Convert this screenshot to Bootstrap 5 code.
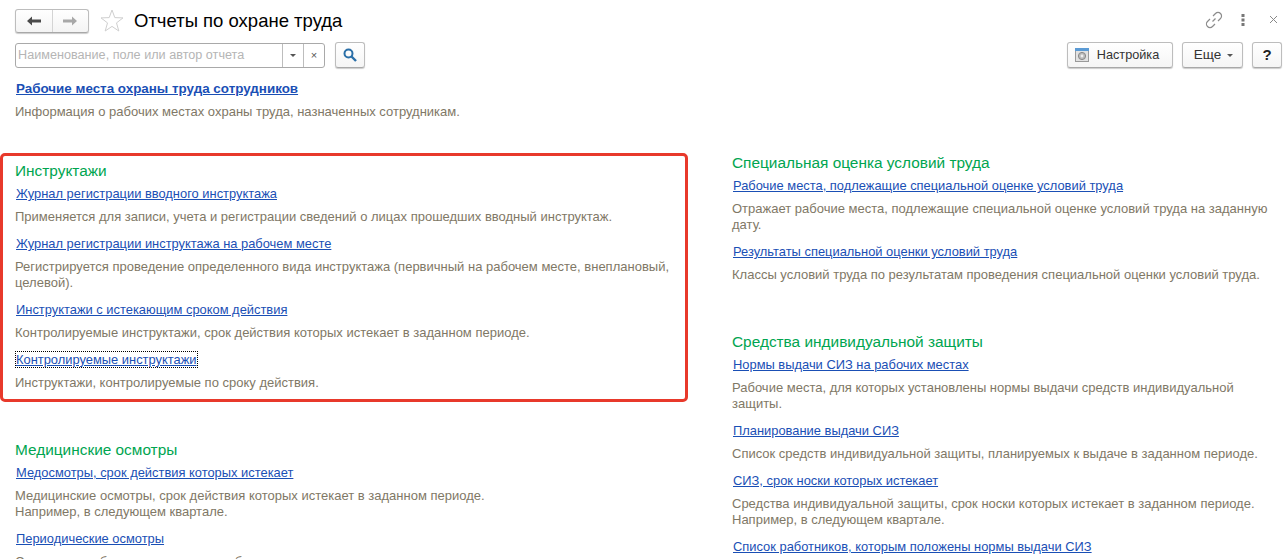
<!DOCTYPE html>
<html lang="ru">
<head>
    <meta charset="UTF-8">
    <meta name="viewport" content="width=device-width, initial-scale=1.0">
    <title>Отчеты по охране труда</title>
    <link href="https://cdn.jsdelivr.net/npm/bootstrap@5.3.0/dist/css/bootstrap.min.css" rel="stylesheet">
    <style>
        html, body { height: 559px; overflow: hidden; }
        body { font-family: "Liberation Sans", Arial, sans-serif; font-size: 13px; line-height: 15px; color: #333; background: #fff; }
        .page-top { padding: 8px 2px 0 15px; height: 81px; }
        .title-row { height: 25px; }
        .nav-pair { width: 74px; height: 24px; border: 1px solid #bdbdbd; border-bottom-color: #a8a8a8; border-radius: 3px; box-shadow: 0 1px 1px #ccc; background: linear-gradient(#fff, #f4f4f4); }
        .nav-half { width: 37px; height: 100%; display: flex; align-items: center; justify-content: center; }
        .nav-half + .nav-half { border-left: 1px solid #d4d4d4; }
        .star-icon { margin: 0 10px 0 11px; }
        .page-title { font-size: 18.5px; line-height: 24px; color: #000; margin: 0; font-weight: 400; }
        .top-icons { margin: 0 4px 2px 0; }
        .icon-dots { margin: 0 24px 0 18px; }
        .filter-row { margin-top: 9px; height: 26px; }
        .search-box { width: 310px; height: 25px; border: 1px solid #a9a9a9; border-radius: 3px; background: #fff; }
        .search-input { flex: 1 1 auto; min-width: 0; border: 0; padding: 0 2px; font-size: 12.65px; color: #333; font-family: inherit; outline: 0; background: transparent; }
        .search-input::placeholder { color: #b5b5b5; opacity: 1; }
        .search-cell { width: 21px; height: 100%; border-left: 1px solid #bdbdbd; display: flex; align-items: center; justify-content: center; font-size: 11px; color: #555; }
        .tool-btn { height: 26px; border: 1px solid #bdbdbd; border-bottom-color: #a8a8a8; border-radius: 3px; background: linear-gradient(#fff, #f5f5f5); box-shadow: 0 1px 1px #ccc; color: #333; font-size: 12.7px; line-height: 24px; padding: 0; display: inline-flex; align-items: center; justify-content: center; }
        .btn-find { width: 30px; margin-left: 10px; }
        .btn-setup { width: 106px; gap: 8px; padding-right: 6px; }
        .btn-more { width: 61px; gap: 6px; margin-left: 9px; padding-left: 2px; font-size: 13.5px; }
        .btn-help { width: 30px; margin-left: 9px; font-weight: 700; font-size: 15px; color: #222; }
        .caret-mark { width: 0; height: 0; border-left: 3px solid transparent; border-right: 3px solid transparent; border-top: 3px solid #555; }
        .report-col { width: 655px; }
        .col-left { width: 717px; padding-left: 15px; flex: none; }
        .col-right { flex: 1 1 auto; padding: 0 14px 0 15px; margin-top: 73px; }
        .group-title { color: #00a550; font-size: 15.4px; line-height: 18px; font-weight: 400; margin: 0 0 6px 0; }
        .report-link { display: inline-block; color: #1a4fb5; font-size: 12.9px; line-height: 15px; text-decoration: underline; margin-left: 1px; }
        .report-link.is-main { font-weight: 700; font-size: 13.4px; }
        .report-link.is-focus { outline: 1px dotted #000; outline-offset: 0; }
        .report-text { color: #7f7866; font-size: 13px; line-height: 16px; margin: 8px 0 0 0; }
        .report-item { margin-bottom: 11px; }
        .red-frame { position: absolute; left: 0; top: 153px; width: 688px; height: 249px; border: 3px solid #e8392b; border-radius: 5px; pointer-events: none; }
        .top-block { margin-bottom: 42px; }
        .gap-block { margin-bottom: 50px; }
    </style>
</head>
<body class="position-relative">
    <div class="page-top">
        <div class="title-row d-flex align-items-center">
            <div class="nav-pair d-flex">
                <div class="nav-half">
                    <svg width="14" height="10" viewBox="0 0 14 10"><path d="M0 5 L5 0.5 V3.6 H14 V6.4 H5 V9.5 Z" fill="#4a4a4a"/></svg>
                </div>
                <div class="nav-half">
                    <svg width="14" height="10" viewBox="0 0 14 10"><path d="M14 5 L9 0.5 V3.6 H0 V6.4 H9 V9.5 Z" fill="#a8a8a8"/></svg>
                </div>
            </div>
            <svg class="star-icon" width="24" height="23" viewBox="0 0 24 23"><path d="M12 1 L14.8 8.6 L23 8.9 L16.5 13.9 L18.8 22 L12 17.4 L5.2 22 L7.5 13.9 L1 8.9 L9.2 8.6 Z" fill="none" stroke="#cfcfcf" stroke-width="1"/></svg>
            <h1 class="page-title">Отчеты по охране труда</h1>
            <div class="top-icons d-flex align-items-center ms-auto">
                <svg width="18" height="18" viewBox="0 0 18 18" fill="none" stroke="#8c8c8c" stroke-width="1.2"><path d="M7.5 10.5 L10.5 7.5"/><path d="M8 5 L10.5 2.5 a3 3 0 0 1 5 5 L13 10"/><path d="M10 13 L7.5 15.5 a3 3 0 0 1 -5 -5 L5 8"/></svg>
                <svg class="icon-dots" width="4" height="12" viewBox="0 0 4 12" fill="#777"><rect x="0.5" y="0" width="3" height="3"/><rect x="0.5" y="4.5" width="3" height="3"/><rect x="0.5" y="9" width="3" height="3"/></svg>
                <svg width="9" height="9" viewBox="0 0 9 9" stroke="#888" stroke-width="1"><path d="M1 1 L8 8 M8 1 L1 8"/></svg>
            </div>
        </div>
        <div class="filter-row d-flex align-items-center">
            <div class="search-box d-flex align-items-center">
                <input class="search-input" type="text" placeholder="Наименование, поле или автор отчета">
                <div class="search-cell"><span class="caret-mark"></span></div>
                <div class="search-cell">×</div>
            </div>
            <button class="tool-btn btn-find" type="button">
                <svg width="14" height="14" viewBox="0 0 14 14" fill="none" stroke="#2a6fa8" stroke-width="2"><circle cx="5.5" cy="5.5" r="4"/><path d="M8.5 8.5 L13 13" stroke-width="2.4"/></svg>
            </button>
            <button class="tool-btn btn-setup ms-auto" type="button">
                <svg width="14" height="14" viewBox="0 0 14 14"><rect x="0.5" y="0.5" width="13" height="13" fill="#e2e2e2" stroke="#9a9a9a"/><rect x="0" y="0" width="14" height="3" fill="#5b9bd5"/><circle cx="7" cy="8" r="3.6" fill="#bbb" stroke="#888"/><circle cx="7" cy="8" r="1.4" fill="#eee"/></svg>
                Настройка
            </button>
            <button class="tool-btn btn-more" type="button">Еще <span class="caret-mark"></span></button>
            <button class="tool-btn btn-help" type="button">?</button>
        </div>
    </div>

    <div class="d-flex">
        <div class="col-left">
            <div class="top-block">
                <a class="report-link is-main" href="#">Рабочие места охраны труда сотрудников</a>
                <p class="report-text">Информация о рабочих местах охраны труда, назначенных сотрудникам.</p>
            </div>
            <div class="gap-block">
                <h2 class="group-title">Инструктажи</h2>
                <div class="report-item">
                    <a class="report-link" href="#">Журнал регистрации вводного инструктажа</a>
                    <p class="report-text">Применяется для записи, учета и регистрации сведений о лицах прошедших вводный инструктаж.</p>
                </div>
                <div class="report-item">
                    <a class="report-link" href="#">Журнал регистрации инструктажа на рабочем месте</a>
                    <p class="report-text report-col">Регистрируется проведение определенного вида инструктажа (первичный на рабочем месте, внеплановый, целевой).</p>
                </div>
                <div class="report-item">
                    <a class="report-link" href="#">Инструктажи с истекающим сроком действия</a>
                    <p class="report-text">Контролируемые инструктажи, срок действия которых истекает в заданном периоде.</p>
                </div>
                <div class="report-item">
                    <a class="report-link is-focus" href="#">Контролируемые инструктажи</a>
                    <p class="report-text">Инструктажи, контролируемые по сроку действия.</p>
                </div>
            </div>
            <div>
                <h2 class="group-title">Медицинские осмотры</h2>
                <div class="report-item">
                    <a class="report-link" href="#">Медосмотры, срок действия которых истекает</a>
                    <p class="report-text">Медицинские осмотры, срок действия которых истекает в заданном периоде.<br>Например, в следующем квартале.</p>
                </div>
                <div class="report-item">
                    <a class="report-link" href="#">Периодические осмотры</a>
                    <p class="report-text">Сотрудники, обязанные проходить обследование в заданном периоде.</p>
                </div>
            </div>
        </div>
        <div class="col-right">
            <div class="gap-block">
                <h2 class="group-title">Специальная оценка условий труда</h2>
                <div class="report-item">
                    <a class="report-link" href="#">Рабочие места, подлежащие специальной оценке условий труда</a>
                    <p class="report-text">Отражает рабочие места, подлежащие специальной оценке условий труда на заданную дату.</p>
                </div>
                <div class="report-item">
                    <a class="report-link" href="#">Результаты специальной оценки условий труда</a>
                    <p class="report-text">Классы условий труда по результатам проведения специальной оценки условий труда.</p>
                </div>
            </div>
            <div>
                <h2 class="group-title">Средства индивидуальной защиты</h2>
                <div class="report-item">
                    <a class="report-link" href="#">Нормы выдачи СИЗ на рабочих местах</a>
                    <p class="report-text">Рабочие места, для которых установлены нормы выдачи средств индивидуальной защиты.</p>
                </div>
                <div class="report-item">
                    <a class="report-link" href="#">Планирование выдачи СИЗ</a>
                    <p class="report-text">Список средств индивидуальной защиты, планируемых к выдаче в заданном периоде.</p>
                </div>
                <div class="report-item">
                    <a class="report-link" href="#">СИЗ, срок носки которых истекает</a>
                    <p class="report-text">Средства индивидуальной защиты, срок носки которых истекает в заданном периоде.<br>Например, в следующем квартале.</p>
                </div>
                <div class="report-item">
                    <a class="report-link" href="#">Список работников, которым положены нормы выдачи СИЗ</a>
                </div>
            </div>
        </div>
    </div>
    <div class="red-frame"></div>
    <script src="https://cdn.jsdelivr.net/npm/bootstrap@5.3.0/dist/js/bootstrap.bundle.min.js"></script>
</body>
</html>
